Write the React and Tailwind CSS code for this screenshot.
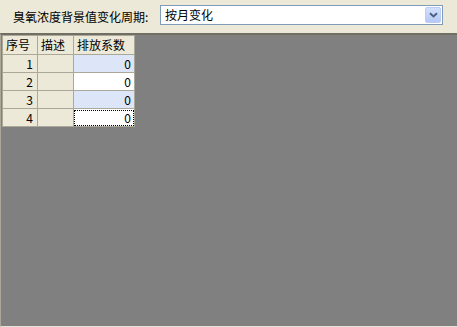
const FONT = { fontFamily: '"Noto Sans CJK SC", "Liberation Sans", sans-serif' };

const rows = [
  { id: 1, value: 0 },
  { id: 2, value: 0 },
  { id: 3, value: 0 },
  { id: 4, value: 0 },
];

export default function App() {
  return (
    <div className="w-[457px] h-[327px] flex flex-col bg-[#ece9d8] text-[12px] text-black overflow-hidden" style={FONT}>
      {/* Top bar */}
      <div className="h-[33px] flex items-center pl-[13px] pr-[14px] shrink-0">
        <span className="leading-none w-[147px]">臭氧浓度背景值变化周期:</span>
        <div className="flex-1 h-[20px] mt-[-3px] border border-[#7f9db9] bg-white flex items-center pl-[4px] pr-[1px]">
          <span className="flex-1 leading-none">按月变化</span>
          <div className="w-[16px] h-[16px] rounded-[2px] bg-gradient-to-b from-[#d3e0fc] to-[#b5c9f5] border border-[#b9cdf7] flex items-center justify-center">
            <svg width="9" height="6" viewBox="0 0 9 6">
              <path d="M1 1.2 L4.5 4.5 L8 1.2" fill="none" stroke="#4d6185" strokeWidth="2" />
            </svg>
          </div>
        </div>
      </div>

      {/* Grid area */}
      <div className="flex-1 bg-[#808080] border-t-2 border-t-[#716f64] border-l border-l-[#aca899] border-b border-b-[#e6e4da] pl-[1px] pt-0">
        <table className="border-collapse">
          <thead>
            <tr className="h-[19px]">
              <th className="w-[35px] bg-[#ece9d8] border border-[#aca899] font-normal text-left pl-[3px] leading-none">序号</th>
              <th className="w-[36px] bg-[#ece9d8] border border-[#aca899] font-normal text-left pl-[3px] leading-none">描述</th>
              <th className="w-[61px] bg-[#ece9d8] border border-[#aca899] font-normal text-left pl-[3px] leading-none">排放系数</th>
            </tr>
          </thead>
          <tbody>
            {rows.map((r, i) => (
              <tr key={r.id} className="h-[18px]">
                <td className="bg-[#ece9d8] border border-[#aca899] text-right pr-[4px] leading-none">{r.id}</td>
                <td className="bg-[#ece9d8] border border-[#aca899]"></td>
                <td className={`border border-[#aca899] text-right pr-[3px] leading-none ${i % 2 === 0 ? 'bg-[#dce6f8]' : 'bg-white'}`}>
                  {i === 3 ? (
                    <div className="h-[16px] border border-dotted border-black flex items-center justify-end pr-[2px] mr-[-3px]">{r.value}</div>
                  ) : (
                    r.value
                  )}
                </td>
              </tr>
            ))}
          </tbody>
        </table>
      </div>
    </div>
  );
}
